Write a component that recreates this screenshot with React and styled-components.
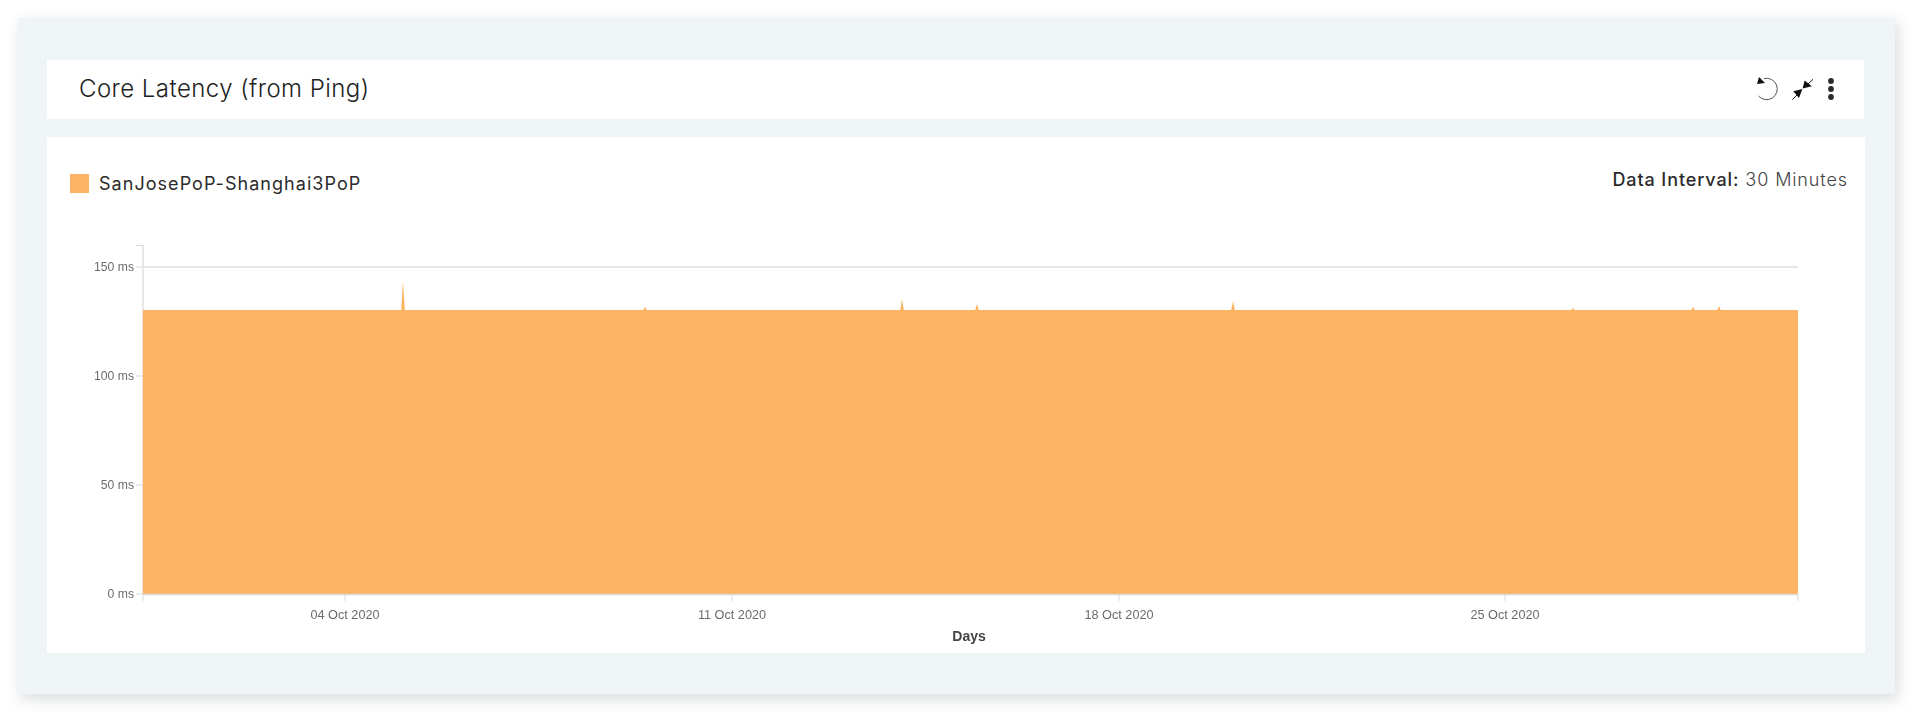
import styled, { createGlobalStyle } from 'styled-components';

const SERIES_COLOR = '#fdb462';
const AXIS_COLOR = '#d6d8da';

// chart coordinates are the page's own pixels, see viewBox on ChartSvg
const PLOT = { left: 143, right: 1798, top: 310, bottom: 594 };
const Y_TICKS = [
  { label: '150 ms', y: 267 },
  { label: '100 ms', y: 376 },
  { label: '50 ms', y: 485 },
  { label: '0 ms', y: 594 },
];
const X_TICKS = [
  { label: '04 Oct 2020', x: 345 },
  { label: '11 Oct 2020', x: 732 },
  { label: '18 Oct 2020', x: 1119 },
  { label: '25 Oct 2020', x: 1505 },
];
const SPIKES = [
  { x: 403, top: 281 },
  { x: 645, top: 307 },
  { x: 902, top: 299 },
  { x: 977, top: 304 },
  { x: 1233, top: 301 },
  { x: 1573, top: 308 },
  { x: 1693, top: 307 },
  { x: 1719, top: 306 },
];

const areaPath = () => {
  const { left, right, top, bottom } = PLOT;
  let d = `M${left} ${bottom}L${left} ${top}`;
  SPIKES.forEach((s) => {
    d += `L${s.x - 1.8} ${top}L${s.x} ${s.top}L${s.x + 1.8} ${top}`;
  });
  return `${d}L${right} ${top}L${right} ${bottom}Z`;
};

const App = () => {
  return (
    <Page>
      <GlobalStyle />
      <Card>
        <Header>
          <Title>Core Latency (from Ping)</Title>
          <Actions>
            <IconButton $w={24}>
              <svg width="24" height="26" viewBox="0 0 24 26">
                <path d="M9 2.6A10.7 10.7 0 1 1 3.5 20" fill="none" stroke="#555" strokeWidth="1" />
                <path d="M4 1L2 8L10 7Z" fill="#111" />
              </svg>
            </IconButton>
            <IconButton $w={24}>
              <svg width="24" height="26" viewBox="0 0 24 26">
                <path d="M2.3 23.7L8 18M23 3.3L18 8" stroke="#222" strokeWidth="1" />
                <path d="M12.4 13L3.3 15.3L9 22Z" fill="#111" />
                <path d="M12.6 12.4L14.6 4.6L21.9 10.2Z" fill="#111" />
              </svg>
            </IconButton>
            <IconButton $w={8}>
              <svg width="8" height="26" viewBox="0 0 8 26">
                <circle cx="4" cy="5" r="2.9" fill="#2b2b2b" />
                <circle cx="4" cy="13" r="2.9" fill="#2b2b2b" />
                <circle cx="4" cy="21" r="2.9" fill="#2b2b2b" />
              </svg>
            </IconButton>
          </Actions>
        </Header>
        <ChartPanel>
          <ChartTop>
            <Legend>
              <LegendSwatch />
              <LegendName>SanJosePoP-Shanghai3PoP</LegendName>
            </Legend>
            <Interval>
              <b>Data Interval:</b> 30 Minutes
            </Interval>
          </ChartTop>
          <ChartSvg viewBox="47 235 1818 418">
            <path d={`M136 245.5H${PLOT.left}V${PLOT.bottom}`} fill="none" stroke={AXIS_COLOR} strokeWidth="1.2" />
            {Y_TICKS.map((t) => (
              <g key={t.label}>
                <line x1="136" x2={PLOT.left} y1={t.y} y2={t.y} stroke={AXIS_COLOR} />
                <AxisLabel x="134" y={t.y + 4} textAnchor="end" $size={12.2}>
                  {t.label}
                </AxisLabel>
              </g>
            ))}
            <line x1={PLOT.left} x2={PLOT.right} y1="267" y2="267" stroke="#e6e7e8" strokeWidth="2" />
            <path d={areaPath()} fill={SERIES_COLOR} />
            <line x1={PLOT.left} x2={PLOT.right} y1={PLOT.bottom + 0.5} y2={PLOT.bottom + 0.5} stroke={AXIS_COLOR} strokeWidth="1.5" />
            <line x1={PLOT.left} x2={PLOT.left} y1={PLOT.bottom} y2={PLOT.bottom + 7} stroke={AXIS_COLOR} />
            <line x1={PLOT.right} x2={PLOT.right} y1={PLOT.bottom} y2={PLOT.bottom + 7} stroke={AXIS_COLOR} />
            {X_TICKS.map((t) => (
              <g key={t.label}>
                <line x1={t.x} x2={t.x} y1={PLOT.bottom} y2={PLOT.bottom + 7} stroke={AXIS_COLOR} />
                <AxisLabel x={t.x} y="619" textAnchor="middle" $size={12.7}>
                  {t.label}
                </AxisLabel>
              </g>
            ))}
            <AxisTitle x="969" y="641" textAnchor="middle">
              Days
            </AxisTitle>
          </ChartSvg>
        </ChartPanel>
      </Card>
    </Page>
  );
};

export default App;

const GlobalStyle = createGlobalStyle`
  html, body {
    margin: 0;
    background: #fff;
  }
  body {
    font-family: 'Inter', 'Liberation Sans', sans-serif;
  }
`;

const Page = styled.div`
  box-sizing: border-box;
  height: 720px;
  padding: 18px 0 0 18px;
  overflow: hidden;
`;

const Card = styled.div`
  display: flex;
  flex-direction: column;
  gap: 18px;
  box-sizing: border-box;
  width: 1877px;
  height: 676px;
  padding: 42px 30px 41px 29px;
  background: #eff4f7;
  box-shadow: 3px 5px 14px rgba(80, 90, 95, 0.22);
`;

const Header = styled.div`
  display: flex;
  justify-content: space-between;
  align-items: center;
  box-sizing: border-box;
  height: 59px;
  margin-right: 1px;
  padding: 0 29px 1px 32px;
  background: #fff;
`;

const Title = styled.h2`
  margin: -1px 0 0;
  font-size: 24px;
  font-weight: 300;
  letter-spacing: 0.45px;
  color: #222;
`;

const Actions = styled.div`
  display: flex;
  align-items: center;
  gap: 11px;

  & > :last-child {
    margin-left: 2px;
  }
`;

const IconButton = styled.div`
  display: flex;
  width: ${(props) => props.$w}px;
  height: 26px;
`;

const ChartPanel = styled.div`
  flex: 1;
  display: flex;
  flex-direction: column;
  background: #fff;
`;

const ChartTop = styled.div`
  display: flex;
  justify-content: space-between;
  height: 98px;
  padding: 32px 17px 0 23px;
  box-sizing: border-box;
`;

const Legend = styled.div`
  display: flex;
  align-items: center;
  gap: 10px;
  height: 28px;
`;

const LegendSwatch = styled.span`
  width: 19px;
  height: 19px;
  background: ${SERIES_COLOR};
`;

const LegendName = styled.span`
  font-size: 18px;
  letter-spacing: 1.04px;
  color: #2b2b2b;
`;

const Interval = styled.div`
  height: 22px;
  font-size: 18px;
  font-weight: 300;
  letter-spacing: 0.9px;
  color: #444;

  b {
    font-weight: 500;
    color: #2b2b2b;
  }
`;

const ChartSvg = styled.svg`
  display: block;
  width: 1818px;
  height: 418px;
`;

const AxisLabel = styled.text`
  font-family: 'Liberation Sans', Arial, sans-serif;
  font-size: ${(props) => props.$size}px;
  fill: #6b6b6b;
  filter: blur(0.5px);
`;

const AxisTitle = styled.text`
  font-family: 'Liberation Sans', Arial, sans-serif;
  font-size: 14px;
  font-weight: 700;
  fill: #444;
  filter: blur(0.5px);
`;
